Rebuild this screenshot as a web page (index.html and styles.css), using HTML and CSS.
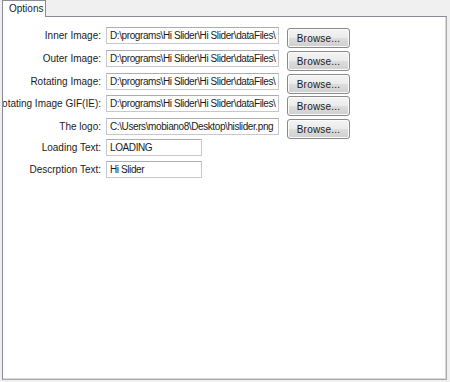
FILE: index.html
```html
<!DOCTYPE html>
<html lang="en">
<head>
    <meta charset="UTF-8">
    <title>Options</title>
    <link rel="stylesheet" href="styles.css">
</head>
<body>
    <div class="tabs">
        <div class="tab">Options</div>
    </div>
    <div class="panel">
        <div class="form">
            <label class="lbl"><span>Inner Image:</span></label>
            <input class="path" value="D:\programs\Hi Slider\Hi Slider\dataFiles\">
            <button class="browse">Browse...</button>

            <label class="lbl"><span>Outer Image:</span></label>
            <input class="path" value="D:\programs\Hi Slider\Hi Slider\dataFiles\">
            <button class="browse">Browse...</button>

            <label class="lbl"><span>Rotating Image:</span></label>
            <input class="path" value="D:\programs\Hi Slider\Hi Slider\dataFiles\">
            <button class="browse">Browse...</button>

            <label class="lbl"><span>Rotating Image GIF(IE):</span></label>
            <input class="path" value="D:\programs\Hi Slider\Hi Slider\dataFiles\">
            <button class="browse">Browse...</button>

            <label class="lbl"><span>The logo:</span></label>
            <input class="path" value="C:\Users\mobiano8\Desktop\hislider.png">
            <button class="browse">Browse...</button>

            <label class="lbl"><span>Loading Text:</span></label>
            <input class="short" value="LOADING">
            <div></div>

            <label class="lbl"><span>Descrption Text:</span></label>
            <input class="short" value="Hi Slider">
            <div></div>
        </div>
    </div>
</body>
</html>
```

FILE: styles.css
```css
*{
    margin: 0;
    padding: 0;
    box-sizing: border-box;
    font-family: "Liberation Sans", Arial, sans-serif;
    font-size: 10px;
    color: #1b1b1b;
}
body{
    background-color: #f0f0f0;
    width: 450px;
    height: 382px;
    overflow: hidden;
}
.tabs{
    display: flex;
    height: 16px;
    padding-left: 2px;
}
.tab{
    width: 44px;
    height: 17px;
    background-color: white;
    border: 1px solid #898c95;
    border-bottom: none;
    padding-left: 6px;
    line-height: 15px;
    font-size: 10px;
    position: relative;
    z-index: 1;
}
.panel{
    margin: 0 3px 0 2px;
    height: 364px;
    background-color: white;
    border: 1px solid #898c95;
    border-right-color: #a8a8ad;
    border-bottom-color: #a8a8ad;
    box-shadow: inset -1px -1px 0 #d9d9dc;
}
.form{
    display: grid;
    grid-template-columns: 98px 173px 63px;
    grid-template-rows: 23px 23px 22px 23px 21px 22px 22px;
    column-gap: 5px;
    align-items: start;
    padding-top: 10px;
}
.lbl{
    display: flex;
    justify-content: flex-end;
    overflow: hidden;
    white-space: nowrap;
    height: 17px;
    line-height: 17px;
}
.path, .short{
    height: 17px;
    border: 1px solid #c5c8ce;
    border-top-color: #abadb3;
    padding-left: 3px;
    background-color: white;
    letter-spacing: -0.4px;
    outline: none;
}
.short{
    width: 96px;
}
.browse{
    margin-left: 3px;
    margin-top: 1px;
    height: 20px;
    width: 63px;
    border: 1px solid #8a8a8a;
    border-radius: 3px;
    background: linear-gradient(#f4f4f4, #ebebeb 50%, #dddddd 51%, #cfcfcf);
    box-shadow: inset 0 0 0 1px #fbfbfb;
    font-size: 10px;
    letter-spacing: 0.2px;
}
```
